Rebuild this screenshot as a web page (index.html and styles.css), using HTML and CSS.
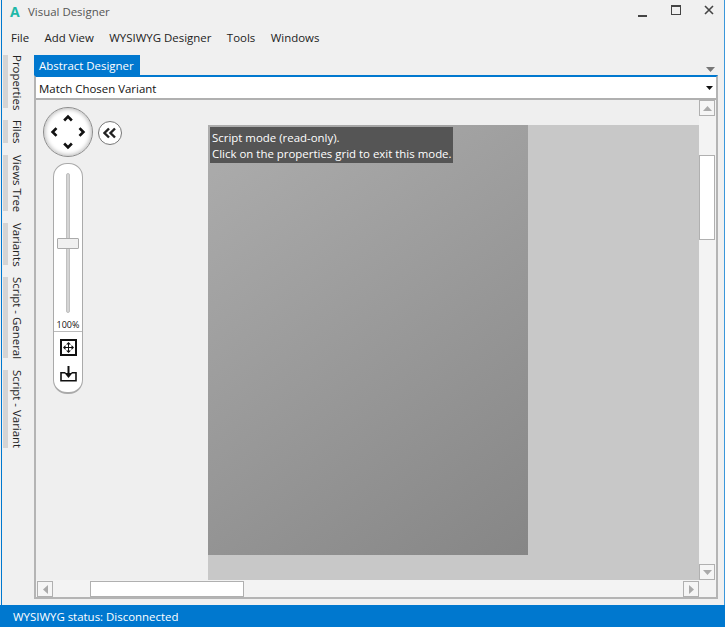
FILE: index.html
```html
<!DOCTYPE html>
<html lang="en">
<head>
<meta charset="utf-8">
<title>Visual Designer</title>
<link rel="stylesheet" href="styles.css">
</head>
<body>
<div class="window">
  <header class="titlebar">
    <span class="logo">A</span>
    <span class="title">Visual Designer</span>
    <div class="winbtns">
      <svg width="14" height="14" viewBox="0 0 14 14"><rect x="2" y="11" width="9" height="2" fill="#444"/></svg>
      <svg width="14" height="14" viewBox="0 0 14 14"><rect x="2.500" y="1.500" width="9" height="9" fill="none" stroke="#444"/><rect x="2" y="1" width="10" height="2" fill="#444"/></svg>
      <svg width="14" height="14" viewBox="0 0 14 14"><path d="M3 2l8 8M11 2l-8 8" stroke="#444" stroke-width="1.600"/></svg>
    </div>
  </header>
  <nav class="menubar">
    <span>File</span><span>Add View</span><span>WYSIWYG Designer</span><span>Tools</span><span>Windows</span>
  </nav>
  <div class="workspace">
    <aside class="sidetabs">
      <div class="sidetab t-props"><span>Properties</span></div>
      <div class="sidetab t-files"><span>Files</span></div>
      <div class="sidetab t-views"><span>Views Tree</span></div>
      <div class="sidetab t-vars"><span>Variants</span></div>
      <div class="sidetab t-sgen"><span>Script - General</span></div>
      <div class="sidetab t-svar"><span>Script - Variant</span></div>
    </aside>
    <main class="dock">
      <div class="tabstrip">
        <div class="tab">Abstract Designer</div>
        <svg class="tabmenu" width="9" height="5" viewBox="0 0 9 5"><path d="M0 0h9L4.500 5z" fill="#777"/></svg>
      </div>
      <div class="panel">
        <div class="combo">
          <span>Match Chosen Variant</span>
          <svg width="7" height="4" viewBox="0 0 7 4"><path d="M0 0h7L3.500 4z" fill="#111"/></svg>
        </div>
        <div class="viewer">
          <div class="viewrow">
            <div class="viewport">
              <div class="stage">
                <div class="paper"><div class="notice">Script mode (read-only).<br>Click on the properties grid to exit this mode.</div></div>
              </div>
              <div class="navpad">
                <svg width="50" height="50" viewBox="0 0 50 50">
                  <path d="M21 13l4-4 4 4M21 37l4 4 4-4M13 21l-4 4 4 4M37 21l4 4-4 4" fill="none" stroke="#111" stroke-width="2.800"/>
                </svg>
              </div>
              <div class="collapse">
                <svg width="14" height="12" viewBox="0 0 14 12"><path d="M6 1.500L1.500 6 6 10.500M12 1.500L7.500 6 12 10.500" fill="none" stroke="#222" stroke-width="2.400"/></svg>
              </div>
              <div class="zoompanel">
                <div class="slider"><div class="track"></div><div class="thumb"></div></div>
                <div class="pct">100%</div>
                <div class="zoomicons">
                  <svg width="17" height="17" viewBox="0 0 17 17"><rect x="1" y="1" width="15" height="15" fill="none" stroke="#111" stroke-width="2"/><path d="M8.500 4v9M4 8.500h9" stroke="#111"/><path d="M8.500 3l2.500 2.500h-5zM8.500 14l2.500-2.500h-5zM3 8.500l2.500-2.500v5zM14 8.500l-2.500-2.500v5z" fill="#111"/></svg>
                  <svg width="17" height="17" viewBox="0 0 17 17"><path d="M5.500 6.700H1v8h15v-8h-4.500" fill="none" stroke="#111" stroke-width="1.600"/><path d="M8.500 0v8" stroke="#111" stroke-width="2"/><path d="M4.500 7h8l-4 5z" fill="#111"/></svg>
                </div>
              </div>
            </div>
            <div class="vscroll">
              <div class="sbtn"><svg width="9" height="5" viewBox="0 0 9 5"><path d="M0 5h9L4.500 0z" fill="#aaa"/></svg></div>
              <div class="vtrack"><div class="vthumb"></div></div>
              <div class="sbtn"><svg width="9" height="5" viewBox="0 0 9 5"><path d="M0 0h9L4.500 5z" fill="#aaa"/></svg></div>
            </div>
          </div>
          <div class="hscroll">
            <div class="sbtn"><svg width="5" height="9" viewBox="0 0 5 9"><path d="M5 0v9L0 4.500z" fill="#aaa"/></svg></div>
            <div class="htrack"><div class="hthumb"></div></div>
            <div class="sbtn"><svg width="5" height="9" viewBox="0 0 5 9"><path d="M0 0v9l5-4.500z" fill="#aaa"/></svg></div>
          </div>
        </div>
      </div>
    </main>
  </div>
  <footer class="statusbar">WYSIWYG status: Disconnected</footer>
</div>
</body>
</html>
```
FILE: styles.css
```css
* { box-sizing: border-box; }
html, body { margin: 0; height: 100%; overflow: hidden; }
body { font-family: "Open Sans", "Noto Sans", sans-serif; font-size: 11.450px; color: #222; background: #f0f0f0; }
.window { width: 725px; height: 627px; display: flex; flex-direction: column; border-left: 1px solid #f0f0f0; border-right: 1px solid #3b97da; padding-left: 1px; box-shadow: inset 1px 0 #0078cf; background: #f0f0f0; }
.titlebar { height: 26px; flex: none; display: flex; align-items: center; padding: 0 0 4px 8px; }
.logo { width: 18px; font-weight: 700; font-size: 14px; color: #1fb8a8; }
.title { color: #555; }
.winbtns { margin-left: auto; display: flex; gap: 19px; padding-right: 8px; }
.menubar { height: 22px; flex: none; display: flex; align-items: center; gap: 15.500px; padding-left: 9px; margin-bottom: 7px; }
.workspace { flex: 1; display: flex; min-height: 0; }
.sidetabs { width: 32px; flex: none; display: flex; flex-direction: column; }
.sidetab { width: 23px; margin-left: 1px; border-left: 5px solid #d4d4d4; writing-mode: vertical-rl; line-height: 18px; white-space: nowrap; padding-left: 2px; }
.sidetab span { display: block; }
.t-props { height: 53px; margin-bottom: 12px; }
.t-files { height: 23px; margin-bottom: 12px; }
.t-views { height: 56px; margin-bottom: 12px; }
.t-vars { height: 42px; margin-bottom: 12px; }
.t-sgen { height: 81px; margin-bottom: 12px; }
.t-svar { height: 78px; }
.dock { width: 684px; display: flex; flex-direction: column; padding-bottom: 6px; }
.tabstrip { height: 20px; flex: none; display: flex; justify-content: space-between; align-items: flex-end; }
.tab { width: 106px; height: 20px; background: #0078cf; color: #fff; padding-left: 5px; line-height: 21px; }
.tabmenu { margin: 0 3px 3px 0; }
.panel { flex: 1; display: flex; flex-direction: column; min-height: 0; border-top: 2px solid #0078cf; border-right: 2px solid #b4b4b4; border-left: 2px solid #b4b4b4; border-bottom: 2px solid #b4b4b4; }
.combo { flex: none; background: #fff; display: flex; align-items: center; justify-content: space-between; padding: 1px 3px 0 3px; color: #111; border-bottom: 2px solid #b0b0b0; height: 23px; }
.viewer { flex: 1; display: flex; flex-direction: column; min-height: 0; background: #f3f3f3; }
.viewrow { flex: 1; display: flex; min-height: 0; }
.viewport { position: relative; flex: 1; background: #efefef; padding: 25px 0 0 172px; }
.stage { height: 100%; background: #c8c8c8; }
.paper { width: 320px; height: 430px; background: linear-gradient(145deg, #adadad, #868686); padding: 2px; }
.notice { width: 243px; height: 36px; background: #555; color: #fff; padding-left: 2px; line-height: 16px; padding-top: 3px; white-space: nowrap; }
.navpad { position: absolute; left: 7px; top: 7px; width: 50px; height: 50px; border-radius: 50%; background: #fff; border: 1px solid #8c8c8c; box-shadow: inset 0 0 4px 1px #bbb; display: flex; align-items: center; justify-content: center; }
.collapse { position: absolute; left: 62px; top: 21px; width: 24px; height: 24px; border-radius: 50%; background: #fff; border: 1px solid #777; display: flex; align-items: center; justify-content: center; }
.zoompanel { position: absolute; left: 17px; top: 63px; width: 30px; height: 231px; border-radius: 14px; background: #fff; border: 1px solid #aaa; border-bottom-width: 2px; display: flex; flex-direction: column; align-items: center; }
.slider { position: relative; width: 100%; height: 155px; flex: none; }
.track { position: absolute; left: 12px; top: 9px; width: 4px; height: 140px; background: #d4d4d4; border: 1px solid #c0c0c0; border-radius: 2px; }
.thumb { position: absolute; left: 3px; top: 74px; width: 22px; height: 11px; background: #f0f0f0; border: 1px solid #aaa; border-radius: 1px; }
.pct { width: 100%; height: 13px; font-size: 9px; line-height: 12px; text-align: center; border-bottom: 1px solid #bbb; color: #111; }
.zoomicons { display: flex; flex-direction: column; align-items: center; gap: 10px; padding-top: 7px; }
.vscroll { width: 17px; flex: none; display: flex; flex-direction: column; background: #f3f3f3; padding: 0 1px 0 0; }
.sbtn { width: 16px; height: 16px; flex: none; background: #f5f5f5; border: 1px solid #b0b0b0; display: flex; align-items: center; justify-content: center; }
.vtrack { flex: 1; padding-top: 39px; }
.vthumb { height: 85px; background: #fff; border: 1px solid #b0b0b0; }
.hscroll { height: 17px; flex: none; display: flex; padding: 1px 17px 0 1px; background: #f3f3f3; }
.htrack { flex: 1; padding-left: 37px; }
.hthumb { width: 154px; height: 16px; background: #fff; border: 1px solid #b0b0b0; }
.statusbar { height: 22px; flex: none; margin: 0 -1px 0 -2px; background: #0078cf; color: #fff; padding-left: 13px; line-height: 23px; }
```
